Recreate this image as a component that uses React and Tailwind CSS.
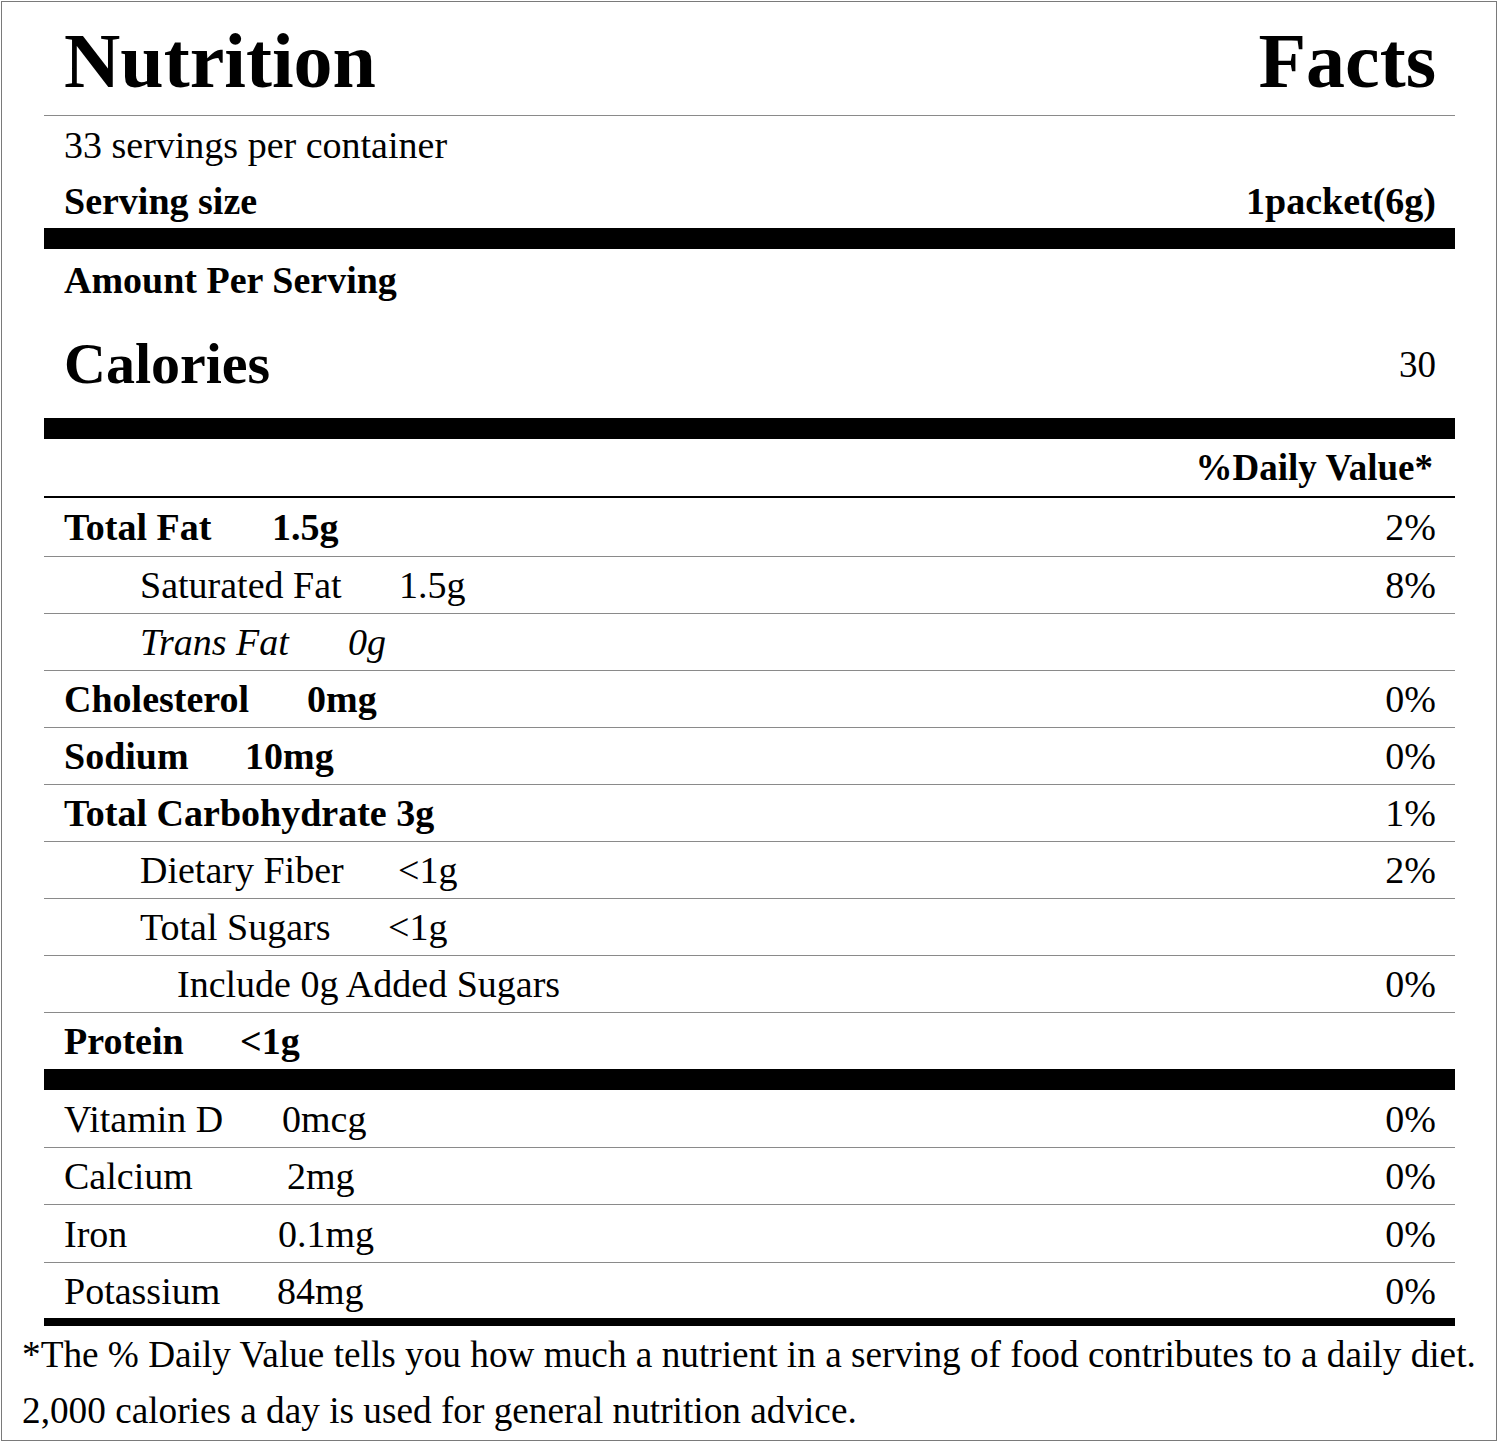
import React from "react";

const rows = [
  { h: "h-[59px] border-b border-[#8a8a8a]", name: "Total Fat", value: "1.5g", dv: "2%", bold: true, nameCls: "w-[208px]" },
  { h: "h-[57px] border-b border-[#8a8a8a]", name: "Saturated Fat", value: "1.5g", dv: "8%", nameCls: "ml-[76px] w-[259px]" },
  { h: "h-[57px] border-b border-[#8a8a8a]", name: "Trans Fat", value: "0g", dv: "", italic: true, nameCls: "ml-[76px] w-[208px]" },
  { h: "h-[57px] border-b border-[#8a8a8a]", name: "Cholesterol", value: "0mg", dv: "0%", bold: true, nameCls: "w-[243px]" },
  { h: "h-[57px] border-b border-[#8a8a8a]", name: "Sodium", value: "10mg", dv: "0%", bold: true, nameCls: "w-[181px]" },
  { h: "h-[57px] border-b border-[#8a8a8a]", name: "Total Carbohydrate 3g", value: "", dv: "1%", bold: true, nameCls: "" },
  { h: "h-[57px] border-b border-[#8a8a8a]", name: "Dietary Fiber", value: "<1g", dv: "2%", nameCls: "ml-[76px] w-[258px]" },
  { h: "h-[57px] border-b border-[#8a8a8a]", name: "Total Sugars", value: "<1g", dv: "", nameCls: "ml-[76px] w-[248px]" },
  { h: "h-[57px] border-b border-[#8a8a8a]", name: "Include 0g Added Sugars", value: "", dv: "0%", nameCls: "ml-[113px]" },
  { h: "h-[56px]", name: "Protein", value: "<1g", dv: "", bold: true, nameCls: "w-[176px]" },
];

const minerals = [
  { h: "h-[58px] border-b border-[#8a8a8a]", name: "Vitamin D", value: "0mcg", dv: "0%", nameCls: "w-[218px]" },
  { h: "h-[57px] border-b border-[#8a8a8a]", name: "Calcium", value: "2mg", dv: "0%", nameCls: "w-[223px]" },
  { h: "h-[58px] border-b border-[#8a8a8a]", name: "Iron", value: "0.1mg", dv: "0%", nameCls: "w-[214px]" },
  { h: "h-[55px]", name: "Potassium", value: "84mg", dv: "0%", nameCls: "w-[213px]" },
];

const Row = ({ row }) => {
  const weight = row.bold ? "font-bold" : "";
  const style = row.italic ? "italic" : "";
  return (
    <div className={`${row.h} flex items-center justify-between pl-[20px] pr-[19px] text-[38px] leading-none whitespace-nowrap`}>
      <div className={`flex ${weight} ${style}`}>
        <span className={`inline-block ${row.nameCls}`}>{row.name}</span>
        {row.value && <span>{row.value}</span>}
      </div>
      <span>{row.dv}</span>
    </div>
  );
};

const App = () => {
  return (
    <div className="pt-[1px] pl-[1px] bg-white text-black font-['Liberation_Serif','Times_New_Roman',serif]">
      <div className="w-[1496px] h-[1440px] border border-[#7a7a7a] flex flex-col">
        <div className="ml-[42px] w-[1411px] flex flex-col">
          {/* title */}
          <div className="h-[114px] border-b border-[#8a8a8a] flex justify-between items-start pt-[20px] pl-[20px] pr-[19px] text-[78px] font-bold leading-none">
            <span>Nutrition</span>
            <span>Facts</span>
          </div>

          <div className="h-[57px] flex items-center pl-[20px] text-[38px] leading-none">
            33 servings per container
          </div>
          <div className="h-[55px] flex items-center justify-between pl-[20px] pr-[19px] text-[38px] leading-none font-bold">
            <span>Serving size</span>
            <span>1packet(6g)</span>
          </div>

          <div className="h-[21px] bg-black" />

          <div className="h-[61px] flex items-center pl-[20px] text-[38px] leading-none font-bold">
            Amount Per Serving
          </div>
          <div className="h-[108px] flex items-center justify-between pl-[20px] pr-[19px] leading-none">
            <span className="text-[58px] font-bold">Calories</span>
            <span className="text-[37px]">30</span>
          </div>

          <div className="h-[21px] bg-black" />

          <div className="h-[59px] border-b-2 border-black flex items-center justify-end pr-[22px] text-[37px] leading-none font-bold">
            %Daily Value*
          </div>

          {rows.map((r) => (
            <Row key={r.name} row={r} />
          ))}

          <div className="h-[21px] bg-black" />

          {minerals.map((r) => (
            <Row key={r.name} row={r} />
          ))}

          <div className="h-[8px] bg-black" />
        </div>

        {/* footnote */}
        <div className="pl-[20px] pt-[1px] text-[37.25px] leading-[56px] whitespace-nowrap">
          <p>*The % Daily Value tells you how much a nutrient in a serving of food contributes to a daily diet.</p>
          <p>2,000 calories a day is used for general nutrition advice.</p>
        </div>
      </div>
    </div>
  );
};

export default App;
